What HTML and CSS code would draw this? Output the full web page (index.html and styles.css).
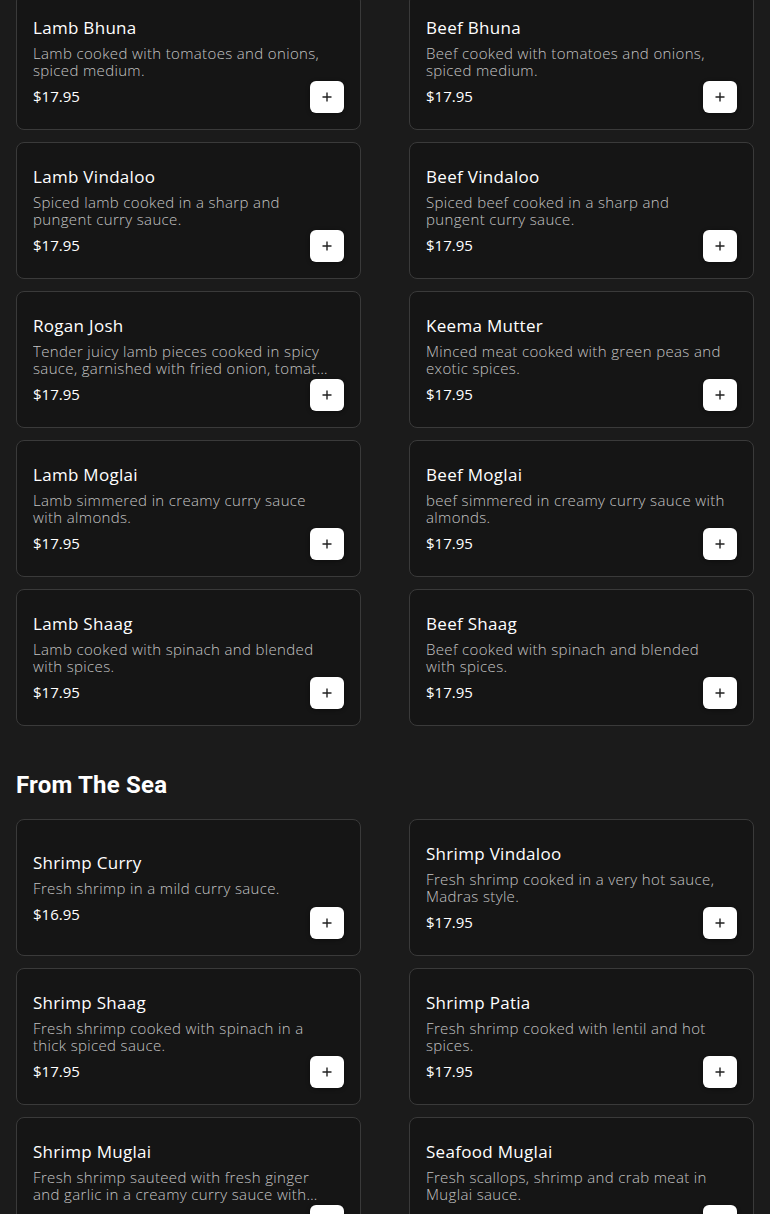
FILE: index.html
```html
<!DOCTYPE html>
<html lang="en">
<head>
    <meta charset="utf-8">
    <title>Menu</title>
    <meta name="viewport" content="width=device-width, initial-scale=1">
    <link rel="stylesheet" href="styles.css">
</head>
<body>
<div class="page">
    <section class="menu-section first">
        <div class="menu-grid">
            <div class="dish">
                <div class="dish-info">
                    <h3 class="dish-name">Lamb Bhuna</h3>
                    <p class="dish-desc">Lamb cooked with tomatoes and onions, spiced medium.</p>
                    <div class="dish-price">$17.95</div>
                </div>
                <button class="add-btn" aria-label="Add"><svg viewBox="0 0 12 12"><path d="M6 1.5v9M1.5 6h9"/></svg></button>
            </div>
            <div class="dish">
                <div class="dish-info">
                    <h3 class="dish-name">Beef Bhuna</h3>
                    <p class="dish-desc">Beef cooked with tomatoes and onions, spiced medium.</p>
                    <div class="dish-price">$17.95</div>
                </div>
                <button class="add-btn" aria-label="Add"><svg viewBox="0 0 12 12"><path d="M6 1.5v9M1.5 6h9"/></svg></button>
            </div>
            <div class="dish">
                <div class="dish-info">
                    <h3 class="dish-name">Lamb Vindaloo</h3>
                    <p class="dish-desc">Spiced lamb cooked in a sharp and pungent curry sauce.</p>
                    <div class="dish-price">$17.95</div>
                </div>
                <button class="add-btn" aria-label="Add"><svg viewBox="0 0 12 12"><path d="M6 1.5v9M1.5 6h9"/></svg></button>
            </div>
            <div class="dish">
                <div class="dish-info">
                    <h3 class="dish-name">Beef Vindaloo</h3>
                    <p class="dish-desc">Spiced beef cooked in a sharp and pungent curry sauce.</p>
                    <div class="dish-price">$17.95</div>
                </div>
                <button class="add-btn" aria-label="Add"><svg viewBox="0 0 12 12"><path d="M6 1.5v9M1.5 6h9"/></svg></button>
            </div>
            <div class="dish">
                <div class="dish-info">
                    <h3 class="dish-name">Rogan Josh</h3>
                    <p class="dish-desc clamp">Tender juicy lamb pieces cooked in spicy sauce, garnished with fried onion, tomato and fresh herbs.</p>
                    <div class="dish-price">$17.95</div>
                </div>
                <button class="add-btn" aria-label="Add"><svg viewBox="0 0 12 12"><path d="M6 1.5v9M1.5 6h9"/></svg></button>
            </div>
            <div class="dish">
                <div class="dish-info">
                    <h3 class="dish-name">Keema Mutter</h3>
                    <p class="dish-desc">Minced meat cooked with green peas and exotic spices.</p>
                    <div class="dish-price">$17.95</div>
                </div>
                <button class="add-btn" aria-label="Add"><svg viewBox="0 0 12 12"><path d="M6 1.5v9M1.5 6h9"/></svg></button>
            </div>
            <div class="dish">
                <div class="dish-info">
                    <h3 class="dish-name">Lamb Moglai</h3>
                    <p class="dish-desc">Lamb simmered in creamy curry sauce with almonds.</p>
                    <div class="dish-price">$17.95</div>
                </div>
                <button class="add-btn" aria-label="Add"><svg viewBox="0 0 12 12"><path d="M6 1.5v9M1.5 6h9"/></svg></button>
            </div>
            <div class="dish">
                <div class="dish-info">
                    <h3 class="dish-name">Beef Moglai</h3>
                    <p class="dish-desc">beef simmered in creamy curry sauce with almonds.</p>
                    <div class="dish-price">$17.95</div>
                </div>
                <button class="add-btn" aria-label="Add"><svg viewBox="0 0 12 12"><path d="M6 1.5v9M1.5 6h9"/></svg></button>
            </div>
            <div class="dish">
                <div class="dish-info">
                    <h3 class="dish-name">Lamb Shaag</h3>
                    <p class="dish-desc">Lamb cooked with spinach and blended with spices.</p>
                    <div class="dish-price">$17.95</div>
                </div>
                <button class="add-btn" aria-label="Add"><svg viewBox="0 0 12 12"><path d="M6 1.5v9M1.5 6h9"/></svg></button>
            </div>
            <div class="dish">
                <div class="dish-info">
                    <h3 class="dish-name">Beef Shaag</h3>
                    <p class="dish-desc">Beef cooked with spinach and blended with spices.</p>
                    <div class="dish-price">$17.95</div>
                </div>
                <button class="add-btn" aria-label="Add"><svg viewBox="0 0 12 12"><path d="M6 1.5v9M1.5 6h9"/></svg></button>
            </div>
        </div>
    </section>

    <section class="menu-section">
        <h2 class="section-title">From The Sea</h2>
        <div class="menu-grid">
            <div class="dish">
                <div class="dish-info">
                    <h3 class="dish-name">Shrimp Curry</h3>
                    <p class="dish-desc">Fresh shrimp in a mild curry sauce.</p>
                    <div class="dish-price">$16.95</div>
                </div>
                <button class="add-btn" aria-label="Add"><svg viewBox="0 0 12 12"><path d="M6 1.5v9M1.5 6h9"/></svg></button>
            </div>
            <div class="dish">
                <div class="dish-info">
                    <h3 class="dish-name">Shrimp Vindaloo</h3>
                    <p class="dish-desc">Fresh shrimp cooked in a very hot sauce, Madras style.</p>
                    <div class="dish-price">$17.95</div>
                </div>
                <button class="add-btn" aria-label="Add"><svg viewBox="0 0 12 12"><path d="M6 1.5v9M1.5 6h9"/></svg></button>
            </div>
            <div class="dish">
                <div class="dish-info">
                    <h3 class="dish-name">Shrimp Shaag</h3>
                    <p class="dish-desc">Fresh shrimp cooked with spinach in a thick spiced sauce.</p>
                    <div class="dish-price">$17.95</div>
                </div>
                <button class="add-btn" aria-label="Add"><svg viewBox="0 0 12 12"><path d="M6 1.5v9M1.5 6h9"/></svg></button>
            </div>
            <div class="dish">
                <div class="dish-info">
                    <h3 class="dish-name">Shrimp Patia</h3>
                    <p class="dish-desc">Fresh shrimp cooked with lentil and hot spices.</p>
                    <div class="dish-price">$17.95</div>
                </div>
                <button class="add-btn" aria-label="Add"><svg viewBox="0 0 12 12"><path d="M6 1.5v9M1.5 6h9"/></svg></button>
            </div>
            <div class="dish">
                <div class="dish-info">
                    <h3 class="dish-name">Shrimp Muglai</h3>
                    <p class="dish-desc clamp">Fresh shrimp sauteed with fresh ginger and garlic in a creamy curry sauce with almonds.</p>
                    <div class="dish-price">$17.95</div>
                </div>
                <button class="add-btn" aria-label="Add"><svg viewBox="0 0 12 12"><path d="M6 1.5v9M1.5 6h9"/></svg></button>
            </div>
            <div class="dish">
                <div class="dish-info">
                    <h3 class="dish-name">Seafood Muglai</h3>
                    <p class="dish-desc">Fresh scallops, shrimp and crab meat in Muglai sauce.</p>
                    <div class="dish-price">$18.95</div>
                </div>
                <button class="add-btn" aria-label="Add"><svg viewBox="0 0 12 12"><path d="M6 1.5v9M1.5 6h9"/></svg></button>
            </div>
        </div>
    </section>
</div>
</body>
</html>
```

FILE: styles.css
```css
html, body {
    margin: 0;
    padding: 0;
    background: #1b1b1b;
    color: #ffffff;
    font-family: "Open Sans", "Liberation Sans", sans-serif;
}

.page {
    height: 1214px;
    overflow: hidden;
    padding: 0 16px;
    box-sizing: border-box;
}

.menu-section.first {
    margin-top: -7px;
}

.section-title {
    margin: 43px 0 18px;
    font-family: Roboto, "Liberation Sans", sans-serif;
    font-size: 24px;
    line-height: 32px;
    font-weight: 700;
    letter-spacing: 0.2px;
}

.menu-grid {
    display: grid;
    grid-template-columns: 1fr 1fr;
    column-gap: 48px;
    row-gap: 12px;
}

.dish {
    display: grid;
    height: 137px;
    box-sizing: border-box;
    padding: 16px;
    background: #151515;
    border: 1px solid #3a3a3a;
    border-radius: 8px;
}

.dish-info {
    grid-area: 1 / 1;
    align-self: center;
    padding-right: 8px;
}

.dish-name {
    margin: 0;
    font-size: 17px;
    line-height: 22px;
    font-weight: 500;
    letter-spacing: 0.3px;
}

.dish-desc {
    margin: 6px 0 5px;
    padding-bottom: 2px;
    font-size: 15px;
    line-height: 17px;
    font-weight: 300;
    letter-spacing: 0.35px;
    color: #c4c4c4;
}

.dish-desc.clamp {
    display: -webkit-box;
    -webkit-line-clamp: 2;
    -webkit-box-orient: vertical;
    overflow: hidden;
}

.dish-price {
    font-size: 15px;
    line-height: 20px;
    font-weight: 400;
}

.add-btn {
    grid-area: 1 / 1;
    justify-self: end;
    align-self: end;
    width: 34px;
    height: 32px;
    padding: 0;
    border: 0;
    border-radius: 6px;
    background: #ffffff;
    box-shadow: 0 1px 4px rgba(0, 0, 0, 0.4);
    display: flex;
    align-items: center;
    justify-content: center;
}

.add-btn svg {
    width: 12px;
    height: 12px;
    fill: none;
    stroke: #222222;
    stroke-width: 1.4;
}
```
